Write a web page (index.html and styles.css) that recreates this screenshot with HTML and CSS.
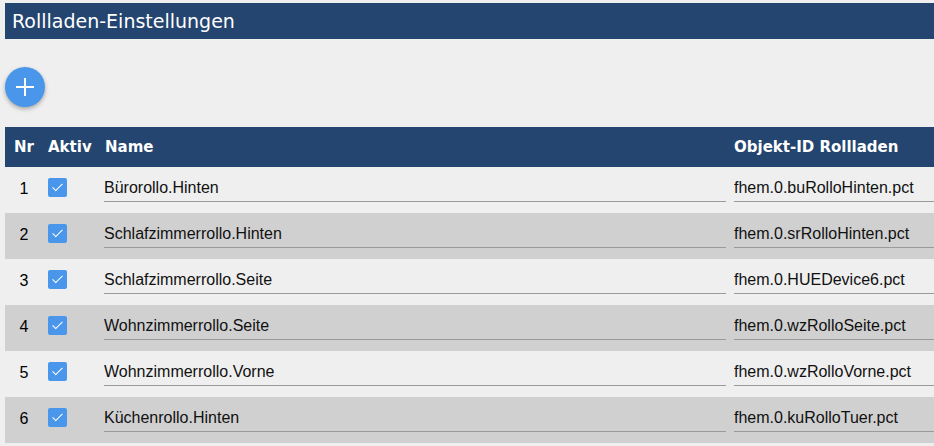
FILE: index.html
```html
<html>
    <head>
        <title>Rollladen-Einstellungen</title>
        <meta charset="utf-8">
        <link rel="stylesheet" href="styles.css">
    </head>
    <body>
        <header class="titlebar">Rollladen-Einstellungen</header>
        <div class="toolbar">
            <button class="add-btn" title="Hinzufügen">
                <svg width="20" height="20" viewBox="0 0 20 20"><path d="M10 1v18M1 10h18" stroke="#fff" stroke-width="2" fill="none"/></svg>
            </button>
        </div>
        <table class="shutters">
            <thead>
                <tr>
                    <th class="col-nr">Nr</th>
                    <th class="col-active">Aktiv</th>
                    <th class="col-name">Name</th>
                    <th class="col-id">Objekt-ID Rollladen</th>
                </tr>
            </thead>
            <tbody>
                <tr>
                    <td class="col-nr">1</td>
                    <td class="col-active"><span class="check"></span></td>
                    <td class="col-name"><input type="text" value="Bürorollo.Hinten"></td>
                    <td class="col-id"><input type="text" value="fhem.0.buRolloHinten.pct"></td>
                </tr>
                <tr>
                    <td class="col-nr">2</td>
                    <td class="col-active"><span class="check"></span></td>
                    <td class="col-name"><input type="text" value="Schlafzimmerrollo.Hinten"></td>
                    <td class="col-id"><input type="text" value="fhem.0.srRolloHinten.pct"></td>
                </tr>
                <tr>
                    <td class="col-nr">3</td>
                    <td class="col-active"><span class="check"></span></td>
                    <td class="col-name"><input type="text" value="Schlafzimmerrollo.Seite"></td>
                    <td class="col-id"><input type="text" value="fhem.0.HUEDevice6.pct"></td>
                </tr>
                <tr>
                    <td class="col-nr">4</td>
                    <td class="col-active"><span class="check"></span></td>
                    <td class="col-name"><input type="text" value="Wohnzimmerrollo.Seite"></td>
                    <td class="col-id"><input type="text" value="fhem.0.wzRolloSeite.pct"></td>
                </tr>
                <tr>
                    <td class="col-nr">5</td>
                    <td class="col-active"><span class="check"></span></td>
                    <td class="col-name"><input type="text" value="Wohnzimmerrollo.Vorne"></td>
                    <td class="col-id"><input type="text" value="fhem.0.wzRolloVorne.pct"></td>
                </tr>
                <tr>
                    <td class="col-nr">6</td>
                    <td class="col-active"><span class="check"></span></td>
                    <td class="col-name"><input type="text" value="Küchenrollo.Hinten"></td>
                    <td class="col-id"><input type="text" value="fhem.0.kuRolloTuer.pct"></td>
                </tr>
            </tbody>
        </table>
    </body>
</html>
```

FILE: styles.css
```css
body{
    margin: 0;
    padding-left: 5px;
    background-color: #efefef;
    font-family: "Liberation Sans", Arial, sans-serif;
    overflow: hidden;
    cursor: default;
}
.titlebar{
    margin-top: 3px;
    height: 36px;
    line-height: 36px;
    padding-left: 7px;
    background-color: #23456f;
    color: #fff;
    font-family: "DejaVu Sans", sans-serif;
    font-size: 19px;
}
.toolbar{
    padding: 28px 0 20px 0;
    display: flex;
}
.add-btn{
    width: 40px;
    height: 40px;
    border: none;
    border-radius: 50%;
    padding: 0;
    background-color: #4a96ea;
    box-shadow: 0 2px 4px rgba(0,0,0,0.3);
    display: flex;
    align-items: center;
    justify-content: center;
}
.shutters{
    width: 100%;
    border-collapse: collapse;
    table-layout: fixed;
}
.shutters th{
    height: 40px;
    padding: 0 0 0 5px;
    background-color: #23456f;
    color: #fff;
    font-family: "DejaVu Sans", sans-serif;
    font-weight: bold;
    font-size: 15px;
    text-align: left;
}
.shutters td{
    padding: 9px 0 11px 5px;
    vertical-align: top;
    font-size: 16px;
    color: #000;
}
.shutters tbody tr:nth-child(even) td{
    background-color: #d0d0d0;
}
.shutters .col-nr{
    width: 38px;
    padding-left: 0;
    text-align: center;
    line-height: 26px;
}
.shutters .col-active{
    width: 52px;
}
.shutters td.col-name{
    padding-left: 4px;
    padding-right: 3px;
}
.shutters .col-id{
    width: 200px;
}
.check{
    display: block;
    width: 19px;
    height: 19px;
    margin-top: 2px;
    border-radius: 2px;
    background-color: #4a96ea;
    position: relative;
}
.check:after{
    content: "";
    position: absolute;
    left: 7px;
    top: 3px;
    width: 4px;
    height: 9px;
    border: solid #fff;
    border-width: 0 1.5px 1.5px 0;
    transform: rotate(45deg);
}
input{
    display: block;
    width: 100%;
    height: 26px;
    box-sizing: border-box;
    margin: 0;
    padding: 0 0 2px 0;
    border: none;
    border-bottom: 1px solid #9a9a9a;
    background: transparent;
    font-family: "Liberation Sans", Arial, sans-serif;
    font-size: 16px;
    color: #111;
    outline: none;
}
```
